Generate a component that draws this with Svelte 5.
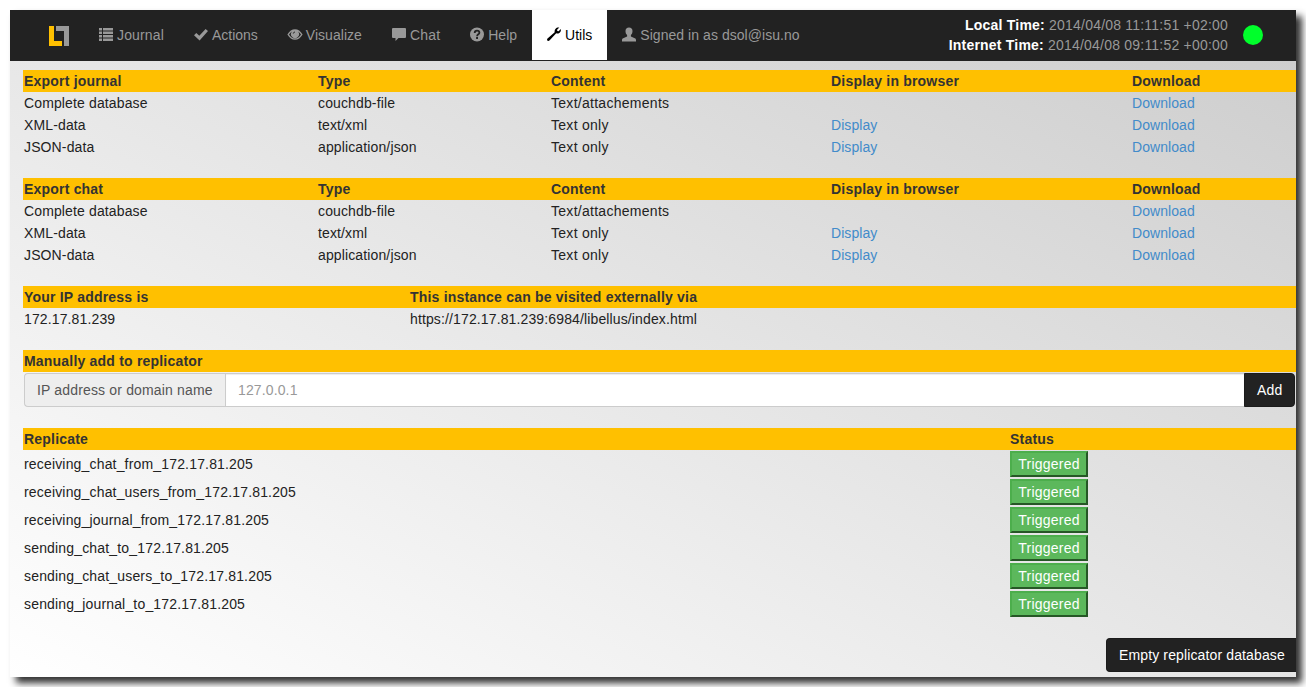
<script>
  const nav = [
    { icon: 'list', label: 'Journal', spacing: 0.14 },
    { icon: 'ok', label: 'Actions', spacing: 0 },
    { icon: 'eye', label: 'Visualize', spacing: 0.03 },
    { icon: 'comment', label: 'Chat', spacing: 0.2 },
    { icon: 'help', label: 'Help', spacing: 0 },
    { icon: 'wrench', label: 'Utils', spacing: 0, active: true },
    { icon: 'user', label: 'Signed in as dsol@isu.no', spacing: 0.05 }
  ];
  const exports = ['Export journal', 'Export chat'];
  const formats = [
    ['Complete database', 'couchdb-file', 'Text/attachements', false],
    ['XML-data', 'text/xml', 'Text only', true],
    ['JSON-data', 'application/json', 'Text only', true]
  ];
  const jobs = [
    'receiving_chat_from_172.17.81.205',
    'receiving_chat_users_from_172.17.81.205',
    'receiving_journal_from_172.17.81.205',
    'sending_chat_to_172.17.81.205',
    'sending_chat_users_to_172.17.81.205',
    'sending_journal_to_172.17.81.205'
  ];
</script>

<div class="window">
  <header>
    <svg class="logo" width="20" height="20" viewBox="0 0 20 20">
      <path fill="#ffc000" d="M0 0h5v15h8v5H0z" />
      <path fill="#999" d="M7 0h13v20h-5V5H7z" />
    </svg>
    <nav>
      {#each nav as item}
        <a class:active={item.active} href="#{item.icon}">
          <svg width="14" height="14" viewBox="0 0 14 14" fill="currentColor">
            {#if item.icon === 'list'}
              <path d="M0 0h3v2.500H0zM4 0h10v2.500H4zM0 3.500h3V6H0zM4 3.500h10V6H4zM0 7h3v2.500H0zM4 7h10v2.500H4zM0 10.500h3V13H0zM4 10.500h10V13H4z" />
            {:else if item.icon === 'ok'}
              <path d="M0 7.200 2.300 5l3 2.700L11.600 1 14 3.100 5.600 12.500z" />
            {:else if item.icon === 'eye'}
              <path fill-rule="evenodd" d="M-.6 6.500C1.500 3 4 1.300 7 1.300s5.500 1.700 7.600 5.200C12.500 10 10 11.700 7 11.700S1.500 10-.6 6.500zM1 6.500C2.700 9.200 4.600 10.400 7 10.400s4.300-1.200 6-3.900c-.9-1.500-1.900-2.500-3-3.100A4 4 0 1 1 4 3.400C2.900 4 1.900 5 1 6.500z" />
              <circle cx="7" cy="5.800" r="2.700" />
              <path d="M5.300 5.600A1.700 1.700 0 0 1 7 4" fill="none" stroke="#222" stroke-width=".9" />
            {:else if item.icon === 'comment'}
              <path d="M1 0h12q1 0 1 1v8q0 1-1 1H6.500L3.500 13v-3H1q-1 0-1-1V1q0-1 1-1z" />
            {:else if item.icon === 'help'}
              <circle cx="7" cy="6.500" r="7" />
              <path d="M4.700 5C4.700 3.300 5.600 2.600 7 2.600s2.400.8 2.400 2.100c0 1.700-2.300 1.600-2.300 3.500" fill="none" stroke="#222" stroke-width="1.800" />
              <path fill="#222" d="M6.100 9.100H8V11H6.100z" />
            {:else if item.icon === 'wrench'}
              <path d="M12.300-.4 10.100 1.700l.2 1.300 1.300.3L13.800 1.100c.5 1.900-.3 3.600-1.900 4.200-.9.400-1.800.3-2.700 0L2.700 12.300Q1.500 13.400.5 12.700-.5 11.600.5 10.500L7.700 4.300C7.200 1.300 9.500-1 12.300-.4z" />
            {:else}
              <path d="M7-.5c2.200 0 3.500 1.400 3.500 3.500 0 1.800-.6 3.200-1.600 4.100v1.400l3.900 1.700c.9.400 1.200.9 1.200 1.800V13.500H0V12c0-.9.300-1.400 1.200-1.800l3.900-1.700V7.100C4.100 6.200 3.500 4.800 3.500 3 3.500.9 4.800-.5 7-.5z" />
            {/if}
          </svg>
          <span style:letter-spacing="{item.spacing}px">{item.label}</span>
        </a>
      {/each}
    </nav>
    <div class="clock">
      <div><b>Local Time:</b> 2014/04/08 11:11:51 +02:00</div>
      <div><b>Internet Time:</b> 2014/04/08 09:11:52 +00:00</div>
    </div>
    <i class="led"></i>
  </header>

  <main>
    {#each exports as title}
      <section>
        <div class="row five head">
          <span>{title}</span><span>Type</span><span>Content</span><span>Display in browser</span><span>Download</span>
        </div>
        {#each formats as [name, type, content, display]}
          <div class="row five">
            <span>{name}</span><span>{type}</span><span class="wide">{content}</span>
            <span class="link">{#if display}<a href="#display">Display</a>{/if}</span>
            <span class="link"><a href="#download">Download</a></span>
          </div>
        {/each}
      </section>
    {/each}

    <section>
      <div class="row ip head"><span>Your IP address is</span><span>This instance can be visited externally via</span></div>
      <div class="row ip"><span>172.17.81.239</span><span>https://172.17.81.239:6984/libellus/index.html</span></div>
    </section>

    <section>
      <div class="row head"><span>Manually add to replicator</span></div>
      <div class="group">
        <label for="host">IP address or domain name</label>
        <input id="host" placeholder="127.0.0.1" />
        <button class="dark">Add</button>
      </div>
    </section>

    <section>
      <div class="row jobs head"><span>Replicate</span><span>Status</span></div>
      {#each jobs as job}
        <div class="row jobs tall"><span>{job}</span><span><button class="state">Triggered</button></span></div>
      {/each}
    </section>

    <div class="foot"><button class="dark">Empty replicator database</button></div>
  </main>
</div>

<style>
  :global(body) { background: #fff; overflow: hidden; }
  .window, .window * { box-sizing: border-box; }
  .window {
    width: 1286px;
    height: 667px;
    margin: 10px;
    font: 14px/20px "Liberation Sans", Arial, sans-serif;
    color: #222;
    background: linear-gradient(to top right, #fff, #ccc);
    box-shadow: 6px 6px 7px #333;
  }
  header {
    display: flex;
    height: 51px;
    background: #222;
    color: #999;
  }
  .logo { margin: 16px 15px 0 39px; flex: none; }
  nav { display: flex; height: 50px; }
  nav a {
    display: flex;
    gap: 4px;
    padding: 15px;
    color: #999;
    text-decoration: none;
    white-space: nowrap;
  }
  nav svg { margin-top: 3px; overflow: visible; flex: none; }
  nav a.active { background: #fff; color: #000; }
  .clock { margin: 5px 15px 0 auto; text-align: right; white-space: nowrap; letter-spacing: .21px; }
  .clock b { color: #fff; }
  .led { width: 20px; height: 20px; margin: 15px 33px 0 0; border-radius: 50%; background: #00ff2b; }
  main { padding: 9px 0 0 13px; }
  section { margin-bottom: 20px; }
  .row { display: grid; height: 22px; padding: 1px; white-space: nowrap; letter-spacing: .13px; }
  .five { grid-template-columns: 294px 233px 280px 301px 1fr; }
  .ip { grid-template-columns: 386px 1fr; }
  .jobs { grid-template-columns: 986px 1fr; letter-spacing: .17px; }
  .head { background: #ffc000; color: #333; font-weight: bold; letter-spacing: .2px; }
  .wide { letter-spacing: .28px; }
  .link { letter-spacing: .06px; }
  .tall { height: 28px; align-items: center; }
  .row a { color: #428bca; text-decoration: none; }
  .group { display: flex; height: 36px; padding: 1px; }
  button, input { font: inherit; }
  label {
    width: 201px;
    padding: 6px 12px;
    border: 1px solid #ccc;
    border-right: 0;
    border-radius: 4px 0 0 4px;
    background: #eee;
    color: #555;
    white-space: nowrap;
    letter-spacing: .16px;
  }
  input {
    flex: 1;
    min-width: 0;
    padding: 6px 12px;
    border: 1px solid #ccc;
    border-right: 0;
    background: #fff;
    box-shadow: inset 0 1px 1px rgba(0, 0, 0, .075);
    letter-spacing: .13px;
  }
  input::placeholder { color: #999; }
  .dark {
    height: 34px;
    padding: 6px 12px;
    border: 1px solid #1b1b1b;
    border-radius: 4px;
    background: #222;
    color: #fff;
    white-space: nowrap;
    letter-spacing: .13px;
  }
  .group .dark { width: 51px; border-radius: 0 4px 4px 0; }
  .state {
    display: block;
    width: 78px;
    height: 26px;
    padding: 1px 6px;
    border: 2px solid;
    border-color: #4cae4c #265726 #265726 #4cae4c;
    background: #5cb85c;
    color: #fff;
    letter-spacing: .22px;
  }
  .foot { display: flex; justify-content: flex-end; }
  .foot .dark { width: 190px; border-right: 0; border-radius: 4px 0 0 4px; }
</style>
